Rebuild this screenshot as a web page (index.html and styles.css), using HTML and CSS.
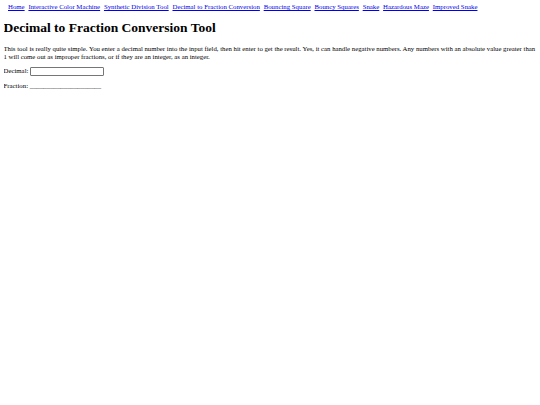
FILE: index.html
```html
<!DOCTYPE html>
<html>
<head>
<meta charset="utf-8">
<link rel="stylesheet" href="styles.css">
<title>Decimal to Fraction Conversion Tool</title>
</head>
<body>
<nav class="nav">
<a href="#">Home</a>
<a href="#">Interactive Color Machine</a>
<a href="#">Synthetic Division Tool</a>
<a href="#">Decimal to Fraction Conversion</a>
<a href="#">Bouncing Square</a>
<a href="#">Bouncy Squares</a>
<a href="#">Snake</a>
<a href="#">Hazardous Maze</a>
<a href="#">Improved Snake</a>
</nav>
<h1 class="title">Decimal to Fraction Conversion Tool</h1>
<p class="intro">This tool is really quite simple. You enter a decimal number into the input field, then hit enter to get the result. Yes, it can handle negative numbers. Any numbers with an absolute value greater than 1 will come out as improper fractions, or if they are an integer, as an integer.</p>
<p class="row row-decimal">Decimal: <input class="field" type="text"></p>
<p class="row">Fraction: <span class="blank">_____________________</span></p>
</body>
</html>
```
FILE: styles.css
```css
html, body { background: #fff; }
body {
  margin: 3px 3.5px;
  font-family: "Liberation Serif", "Times New Roman", serif;
  font-size: 6.8px;
  line-height: 8px;
  color: #000;
}
.nav { padding: 0 4.5px; margin: 0; font-size: 6.8px; }
.nav a { color: #0000ee; text-decoration: underline; margin-right: 2.1px; }
.title {
  font-size: 13.5px;
  line-height: 16px;
  font-weight: bold;
  margin: 9px 0 9px;
}
.intro { margin: 0 0 6px; font-size: 6.75px; }
.row { margin: 0 0 7px; }
.row-decimal { margin-bottom: 6px; }
.field {
  width: 70px;
  height: 7px;
  padding: 0 1px;
  border: 1px solid #767676;
  border-radius: 1px;
  font-size: 6.8px;
  vertical-align: middle;
}
```
